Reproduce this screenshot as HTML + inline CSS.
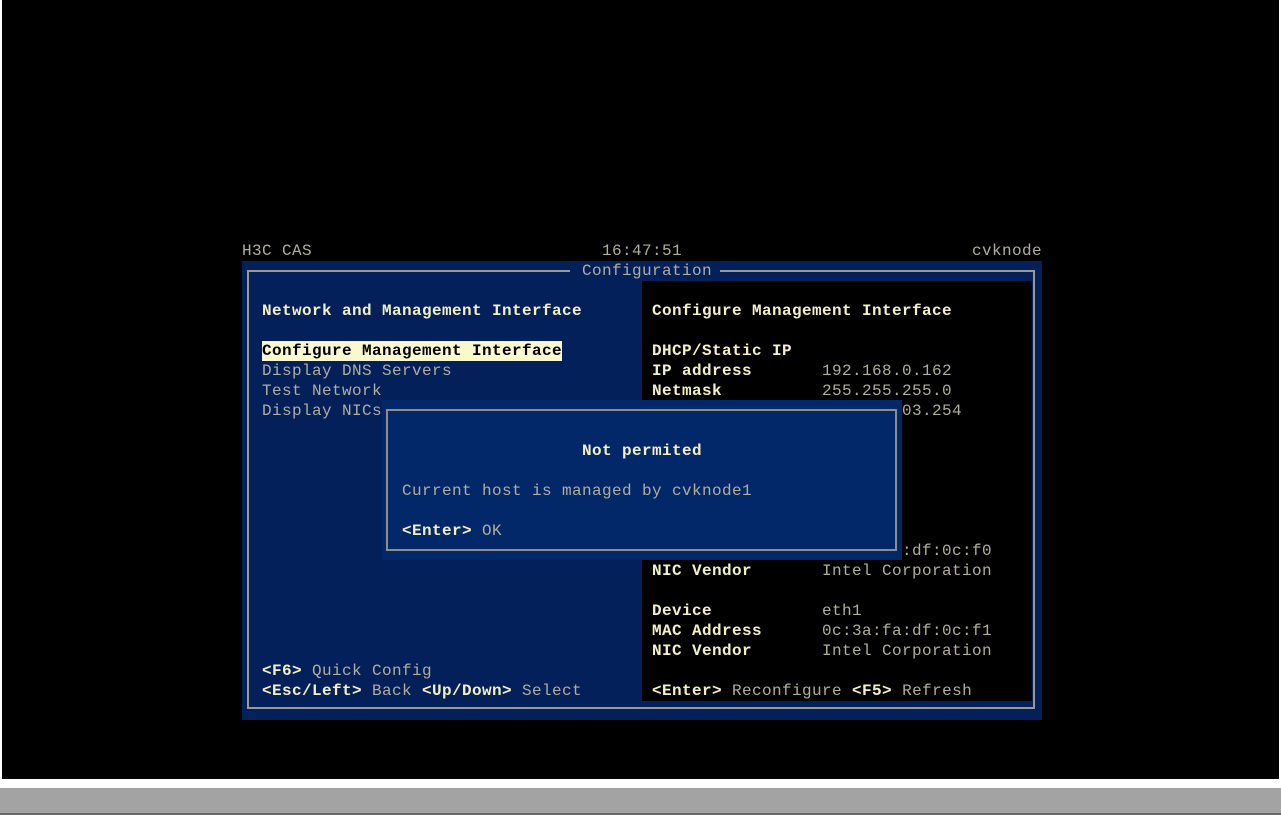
<!DOCTYPE html>
<html><head><meta charset="utf-8"><style>
html,body{margin:0;padding:0;width:1281px;height:815px;background:#fff;overflow:hidden}
.scr{position:absolute;left:2px;top:0;width:1277px;height:779px;background:#000}
.bar{position:absolute;left:0;top:788px;width:1281px;height:25px;background:#a3a3a3}
.bar2{position:absolute;left:0;top:813px;width:1281px;height:2px;background:#666}
.t{position:absolute;font-family:"Liberation Mono",monospace;font-size:16px;letter-spacing:0.4px;line-height:20px;height:20px;white-space:pre;font-weight:bold;margin-top:1px}
.y{color:#f2f0c4}.g{color:#b0ae9c;font-weight:normal}
.box{position:absolute}
</style></head><body>
<div class="scr"></div>
<div class="bar"></div><div class="bar2"></div>
<div class="box" style="left:242px;top:261px;width:800px;height:459px;background:#04205a"></div>
<div class="box" style="left:247px;top:270px;width:788px;height:439px;border:2px solid #9a9a90;box-sizing:border-box"></div>
<div class="box" style="left:642px;top:281px;width:390px;height:420px;background:#000"></div>
<div class="box" style="left:570px;top:261px;width:150px;height:20px;background:#04205a"></div>

<div class="t g" style="left:242px;top:240px">H3C CAS</div>
<div class="t g" style="left:602px;top:240px">16:47:51</div>
<div class="t g" style="left:972px;top:240px">cvknode</div>
<div class="t g" style="left:582px;top:260px">Configuration</div>

<div class="t y" style="left:262px;top:300px">Network and Management Interface</div>
<div class="t" style="left:262px;top:340px;background:#fbf8cf;color:#000">Configure Management Interface</div>
<div class="t g" style="left:262px;top:360px">Display DNS Servers</div>
<div class="t g" style="left:262px;top:380px">Test Network</div>
<div class="t g" style="left:262px;top:400px">Display NICs</div>
<div class="t" style="left:262px;top:660px"><span class="y">&lt;F6&gt;</span><span class="g"> Quick Config</span></div>
<div class="t" style="left:262px;top:680px"><span class="y">&lt;Esc/Left&gt;</span><span class="g"> Back </span><span class="y">&lt;Up/Down&gt;</span><span class="g"> Select</span></div>

<div class="t y" style="left:652px;top:300px">Configure Management Interface</div>
<div class="t y" style="left:652px;top:340px">DHCP/Static IP</div>
<div class="t y" style="left:652px;top:360px">IP address</div><div class="t g" style="left:822px;top:360px">192.168.0.162</div>
<div class="t y" style="left:652px;top:380px">Netmask</div><div class="t g" style="left:822px;top:380px">255.255.255.0</div>
<div class="t g" style="left:902px;top:400px">03.254</div>
<div class="t g" style="left:822px;top:540px">0c:3a:fa:df:0c:f0</div>
<div class="t y" style="left:652px;top:560px">NIC Vendor</div><div class="t g" style="left:822px;top:560px">Intel Corporation</div>
<div class="t y" style="left:652px;top:600px">Device</div><div class="t g" style="left:822px;top:600px">eth1</div>
<div class="t y" style="left:652px;top:620px">MAC Address</div><div class="t g" style="left:822px;top:620px">0c:3a:fa:df:0c:f1</div>
<div class="t y" style="left:652px;top:640px">NIC Vendor</div><div class="t g" style="left:822px;top:640px">Intel Corporation</div>
<div class="t" style="left:652px;top:680px"><span class="y">&lt;Enter&gt;</span><span class="g"> Reconfigure </span><span class="y">&lt;F5&gt;</span><span class="g"> Refresh</span></div>

<div class="box" style="left:382px;top:400px;width:520px;height:160px;background:#03286a"></div>
<div class="box" style="left:386px;top:409px;width:511px;height:142px;border:2px solid #8e8e86;box-sizing:border-box"></div>
<div class="t y" style="left:582px;top:440px">Not permited</div>
<div class="t g" style="left:402px;top:480px">Current host is managed by cvknode1</div>
<div class="t" style="left:402px;top:520px"><span class="y">&lt;Enter&gt;</span><span class="g"> OK</span></div>
</body></html>
